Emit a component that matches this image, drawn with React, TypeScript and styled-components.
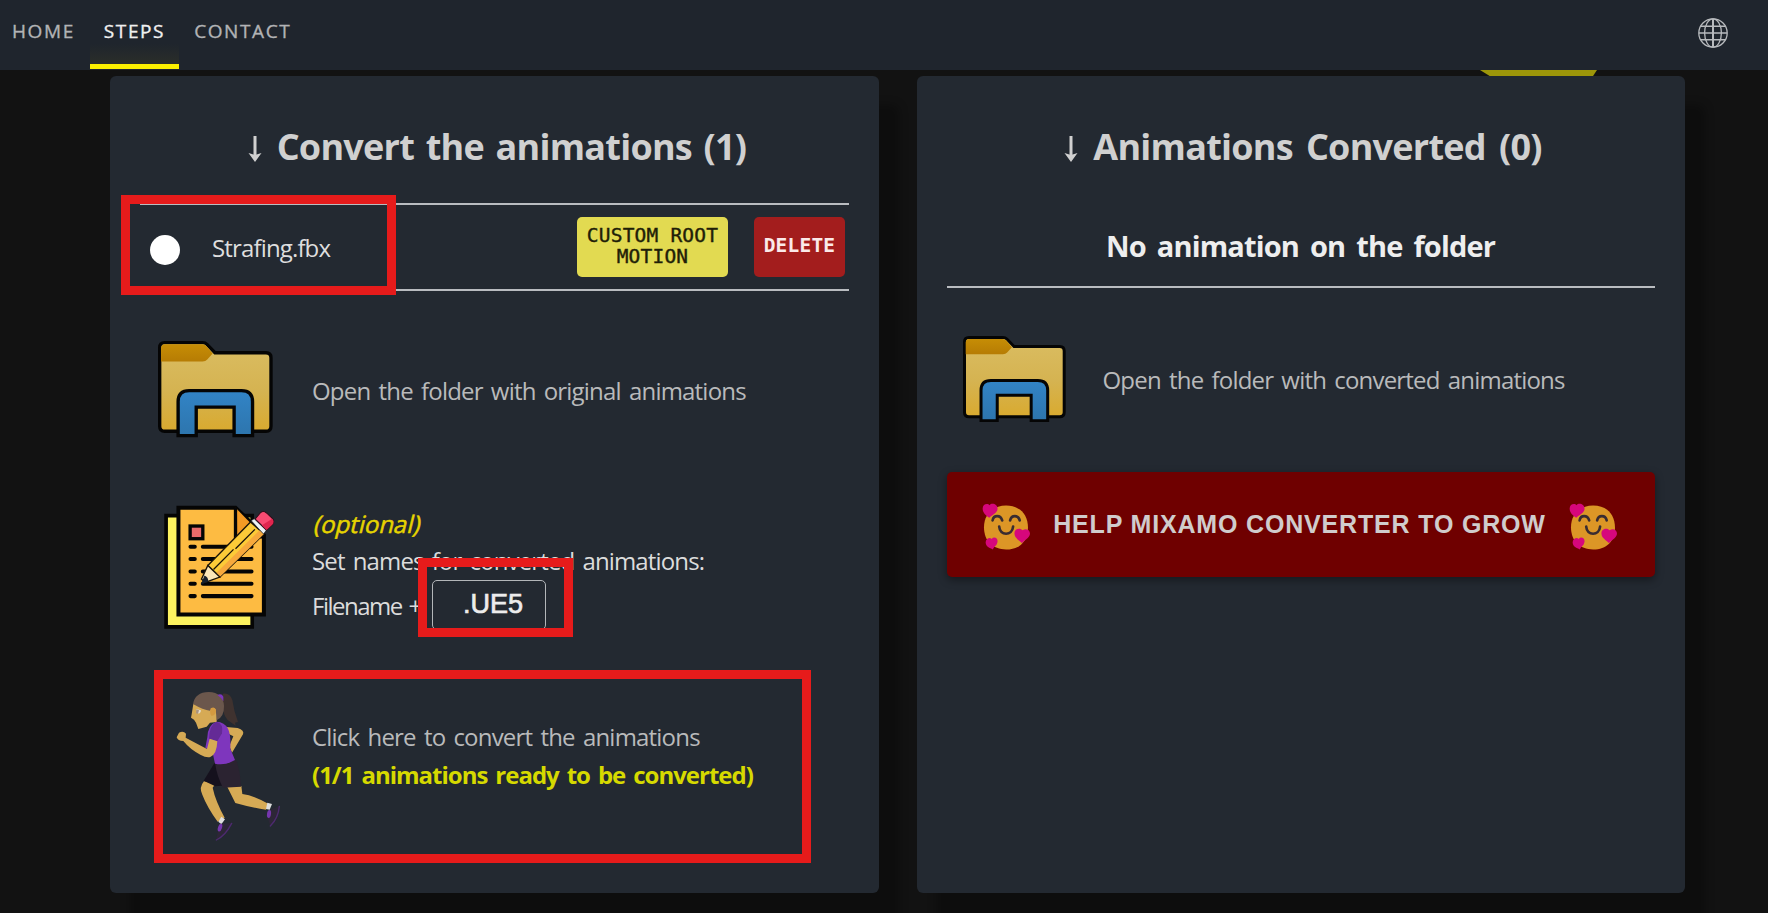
import React from "react";
import styled, { createGlobalStyle } from "styled-components";

const GlobalStyle = createGlobalStyle`
  * { box-sizing: border-box; }
  html, body { margin: 0; padding: 0; background: #121212; }
  body {
    font-family: "Open Sans", "Noto Sans", sans-serif;
    color: #d8d8d8;
    overflow: hidden;
  }
`;

const Page = styled.div`
  position: relative;
  width: 1768px;
  height: 913px;
  overflow: hidden;
  background: #121212;
`;

const Header = styled.header`
  position: relative;
  z-index: 2;
  display: flex;
  justify-content: space-between;
  height: 70px;
  padding-right: 40px;
  background: #1f252d;
`;

const Nav = styled.nav`
  display: flex;
  gap: 1px;
  margin-left: -2px;
`;

const Tab = styled.a<{ $active?: boolean }>`
  height: 69px;
  padding: 0 14px;
  font-size: 19px;
  font-weight: 500;
  line-height: 62px;
  letter-spacing: 1.6px;
  -webkit-text-stroke: 0.35px currentColor;
  color: ${(p) => (p.$active ? "#f0f0f0" : "#b2b3b5")};
  border-bottom: 5px solid ${(p) => (p.$active ? "#fbf000" : "transparent")};
  background: ${(p) =>
    p.$active ? "linear-gradient(to top, #2b2e29 0, #1f252d 20px)" : "none"};
`;

const GlobeButton = styled.span`
  display: flex;
  align-items: center;
  height: 65px;
`;

const Ribbon = styled.div`
  position: absolute;
  left: 1480px;
  top: 70px;
  width: 117px;
  height: 8px;
  background: #9d960a;
  clip-path: polygon(0 0, 100% 0, 95.5% 100%, 11% 100%);
`;

const Main = styled.main`
  position: relative;
  display: grid;
  grid-template-columns: 769px 768px;
  column-gap: 37.5px;
  padding: 6px 0 0 110px;
`;

const Card = styled.section`
  display: flex;
  flex-direction: column;
  height: 817px;
  padding: 45px 30px 0;
  border-radius: 6px;
  background: #232931;
  box-shadow: 20px 29px 10px rgba(0, 0, 0, 0.28);
`;

const Title = styled.h2<{ $space: number }>`
  display: flex;
  justify-content: center;
  align-items: center;
  gap: 15px;
  margin: 0;
  padding: 1px 0 0 5px;
  height: 50px;
  font-size: 36px;
  font-weight: 700;
  line-height: 50px;
  letter-spacing: -0.75px;
  word-spacing: ${(p) => p.$space}px;
  color: #d0d0d0;
`;

const FileRow = styled.div`
  display: flex;
  align-items: center;
  height: 88px;
  margin-top: 32px;
  padding: 0 4px 0 10px;
  border-top: 2px solid #b9bcc0;
  border-bottom: 2px solid #b9bcc0;
`;

const Bullet = styled.span`
  width: 30px;
  height: 30px;
  margin: 6px 32px 0 0;
  border-radius: 50%;
  background: #fff;
`;

const FileName = styled.span`
  flex: 1;
  font-size: 24px;
  letter-spacing: -0.85px;
  color: #dedede;
`;

const SmallButton = styled.button<{ $danger?: boolean }>`
  width: ${(p) => (p.$danger ? 91 : 151)}px;
  height: 60px;
  margin-left: ${(p) => (p.$danger ? 26 : 0)}px;
  padding: 0 0 3px;
  border: 0;
  border-radius: 5px;
  font-family: "DejaVu Sans Mono", monospace;
  font-size: 19.5px;
  font-weight: ${(p) => (p.$danger ? 700 : 400)};
  line-height: 21px;
  letter-spacing: 0.2px;
  -webkit-text-stroke: ${(p) => (p.$danger ? 0 : 0.4)}px currentColor;
  color: ${(p) => (p.$danger ? "#fbe9e9" : "#1f1e08")};
  background: ${(p) => (p.$danger ? "#a31d1d" : "#e2da51")};
`;

const ActionRow = styled.div<{ $height: number; $iconCol: number; $top?: number }>`
  display: grid;
  grid-template-columns: ${(p) => p.$iconCol}px 1fr;
  grid-template-rows: ${(p) => p.$height}px;
  align-items: center;
  height: ${(p) => p.$height}px;
  margin-top: ${(p) => p.$top ?? 0}px;
`;

const IconSlot = styled.div<{ $left: number; $shift?: number }>`
  display: flex;
  padding-left: ${(p) => p.$left}px;
  margin-top: ${(p) => p.$shift ?? 0}px;
`;

const ActionText = styled.p<{ $bright?: boolean }>`
  margin: 0;
  font-size: 24px;
  line-height: 38px;
  letter-spacing: ${(p) => (p.$bright ? -0.86 : -0.8)}px;
  word-spacing: 2.7px;
  white-space: nowrap;
  color: ${(p) => (p.$bright ? "#dcdcdc" : "#b9babb")};
`;

const Ready = styled(ActionText)`
  font-weight: 700;
  letter-spacing: -1px;
  color: #d6d900;
`;

const Optional = styled.p`
  width: max-content;
  margin: 0 0 0 3px;
  font-size: 24px;
  font-weight: 500;
  line-height: 37px;
  transform: skewX(-14deg);
  -webkit-text-stroke: 0.5px currentColor;
  color: #e6d400;
`;

const SuffixLine = styled.label`
  display: grid;
  grid-template-columns: 120px auto;
  justify-content: start;
  align-items: center;
  font-size: 24px;
  letter-spacing: -1.5px;
  word-spacing: 2px;
  color: #dcdcdc;
`;

const SuffixBox = styled.span`
  width: 114px;
  height: 50px;
  padding-left: 30px;
  border: 1px solid #b3b6b9;
  border-radius: 5px;
  font-family: "Liberation Sans", Arial, sans-serif;
  font-size: 27px;
  line-height: 47px;
  letter-spacing: 0;
  -webkit-text-stroke: 0.7px #ececec;
  color: #ececec;
`;

const Empty = styled.p`
  margin: 45px 0 0;
  padding-bottom: 10px;
  border-bottom: 2px solid #b9bcc0;
  font-size: 29px;
  font-weight: 700;
  line-height: 60px;
  letter-spacing: -0.85px;
  word-spacing: 4.3px;
  text-align: center;
  color: #eeeeee;
`;

const HelpButton = styled.button`
  display: flex;
  flex-shrink: 0;
  justify-content: space-between;
  align-items: center;
  height: 105px;
  padding: 0 37px 0 35px;
  border: 0;
  border-radius: 5px;
  background: #6f0000;
  box-shadow: 0 3px 8px rgba(0, 0, 0, 0.4);
`;

const HelpLabel = styled.span`
  padding-bottom: 2px;
  font: 700 25px/30px "Liberation Sans", Arial, sans-serif;
  letter-spacing: 0.83px;
  color: #d0cccc;
`;

const Highlight = styled.div<{ $x: number; $y: number; $w: number; $h: number }>`
  position: absolute;
  z-index: 3;
  left: ${(p) => p.$x}px;
  top: ${(p) => p.$y}px;
  width: ${(p) => p.$w}px;
  height: ${(p) => p.$h}px;
  border: 9px solid #e61b1b;
  pointer-events: none;
`;

const ArrowIcon = styled.svg`
  margin-top: 4px;
`;

const Arrow = () => (
  <ArrowIcon width="14" height="26" viewBox="0 0 14 26">
    <path d="M7 0V23" stroke="#d0d0d0" strokeWidth="3" />
    <path d="M0.5 17L7 19L13.500 17L7 26Z" fill="#d0d0d0" />
  </ArrowIcon>
);

const Globe = () => (
  <svg width="30" height="30" viewBox="0 0 30 30" fill="none" stroke="#b8bbbe" strokeWidth="1.3">
    <circle cx="15" cy="15" r="14.2" />
    <ellipse cx="15" cy="15" rx="8.4" ry="14.2" />
    <path d="M15 1V29" strokeWidth="2" />
    <path d="M3 8.200H27M1 15H29M3 21.800H27" strokeWidth="1.500" />
  </svg>
);

const Folder = ({ width, id }: { width: number; id: string }) => (
  <svg width={width} height={width * 0.84} viewBox="143 65 343 288">
    <defs>
      <linearGradient id={`${id}-body`} x1="0" y1="0" x2="0" y2="1">
        <stop offset="0" stopColor="#dabd62" />
        <stop offset="0.55" stopColor="#d5b351" />
        <stop offset="1" stopColor="#d9aa2f" />
      </linearGradient>
      <linearGradient id={`${id}-tab`} x1="0" y1="0" x2="0" y2="1">
        <stop offset="0" stopColor="#c68d05" />
        <stop offset="1" stopColor="#b67c04" />
      </linearGradient>
      <linearGradient id={`${id}-clip`} x1="0" y1="0" x2="0" y2="1">
        <stop offset="0" stopColor="#3284c6" />
        <stop offset="1" stopColor="#2d75ad" />
      </linearGradient>
    </defs>
    <path
      d="M148 85Q148 70 163 70H276Q284 70 289 75L313 100H465Q480 100 480 115V319Q480 334 465 334H163Q148 334 148 319Z"
      fill={`url(#${id}-body)`}
      stroke="#050505"
      strokeWidth="10"
    />
    <path d="M152 86Q153 76 163 75H274Q282 75 287 80L306 102L290 120Q285 126 276 126H152Z" fill={`url(#${id}-tab)`} />
    <path
      d="M203 347V246Q203 213 236 213H392Q425 213 425 246V347H370V262H257V347Z"
      fill={`url(#${id}-clip)`}
      stroke="#050505"
      strokeWidth="10"
    />
  </svg>
);

const Notes = () => (
  <svg width="111" height="123.500" viewBox="160 75 332 370">
    <path d="M166 107H424V440H166Z" fill="#fdf360" stroke="#050505" strokeWidth="11" />
    <path d="M203 83H374L459 165V403H203Z" fill="#fdbb42" stroke="#050505" strokeWidth="12" />
    <path d="M374 83V170H459" fill="#f39a24" stroke="#050505" strokeWidth="10" />
    <path d="M380 94L414 128L382 162Z" fill="#f39a24" />
    <rect x="238" y="138" width="38" height="38" fill="#ea6a6a" stroke="#050505" strokeWidth="10" />
    <path
      d="M239 200H252M276 200H422M239 237H252M276 237H422M239 274H252M276 274H422M239 311H252M276 311H422M239 348H252M276 348H422"
      stroke="#050505"
      strokeWidth="12"
      strokeLinecap="round"
    />
    <path d="M291 256L419 126L459 162L327 291Z" fill="#fccb38" stroke="#1b1408" strokeWidth="4" />
    <path d="M314 281L446 151L459 162L327 291Z" fill="#f7a93c" />
    <path d="M308 268L368 208M374 206L432 148" stroke="#1b1408" strokeWidth="4" />
    <path d="M291 256L327 291L283 307L272 297Z" fill="#fbe6b8" stroke="#1b1408" strokeWidth="4" />
    <path d="M281 286Q293 290 292 304L270 314Z" fill="#17202c" />
    <path d="M421 122L430 116L466 151L458 162Z" fill="#eef3f5" stroke="#222" strokeWidth="2" />
    <path d="M433 117L448 99Q457 90 467 99L485 116Q492 124 484 134L467 150Z" fill="#f84b72" stroke="#2b0b16" strokeWidth="3" />
    <path d="M453 136L484 116Q492 124 484 134L467 150Z" fill="#e0264f" />
  </svg>
);

const Runner = () => (
  <svg width="105" height="150" viewBox="198 95 315 450">
    <path d="M338 103Q360 99 367 122Q371 153 384 188L375 190L377 199L361 188Q344 180 339 150Z" fill="#3f322f" />
    <path d="M348 203L383 206Q404 213 399 225L366 280L358 260L370 231L352 222Z" fill="#d6aa55" />
    <path d="M250 134L245 165L243 175L252 181L258 190L265 209L290 202L300 190L320 188L322 140Z" fill="#d6aa55" />
    <path d="M249 134Q255 99 296 98Q340 100 342 140Q343 172 320 183L317 150Q306 140 300 154Q280 152 249 134Z" fill="#6b574c" />
    <path d="M302 147Q315 140 318 153Q319 167 305 170Q298 164 302 147Z" fill="#d49a40" />
    <path d="M322 107Q335 101 340 112V126Q332 113 322 107Z" fill="#7c36bd" />
    <path d="M258 149L273 153Q272 164 263 162Z" fill="#e3dccb" />
    <path d="M259 150L267 153L264 163L258 162Z" fill="#a9927d" />
    <path d="M282 366Q266 384 277 406Q291 443 323 487L344 475Q316 424 308 385L316 374Z" fill="#d6aa55" />
    <path d="M352 383L376 431Q425 445 468 451L476 434Q432 408 397 404L394 380Z" fill="#d6aa55" />
    <path d="M313 312L331 314L352 378L316 381L281 364Z" fill="#15111d" />
    <path d="M315 310L379 303Q391 337 393 382L339 385Q321 352 315 310Z" fill="#2b2331" />
    <path d="M319 187Q344 188 354 208Q363 225 361 268L375 302Q348 319 315 313L308 280L286 265L292 234Q293 197 319 187Z" fill="#7e36bd" />
    <path d="M319 187Q341 192 336 222L322 246L297 239Q298 197 319 187Z" fill="#642a96" />
    <path d="M299 238L322 246Q320 285 302 292Q292 297 271 286Q240 270 220 245Q203 245 200 234L207 220Q220 213 228 223L227 235L291 269Z" fill="#d6aa55" />
    <path d="M334 472L345 480L334 495L325 487Z" fill="#dedede" />
    <path d="M472 430L486 434L479 451L468 449Z" fill="#dedede" />
    <path d="M329 494L366 490Q350 530 318 541Z" fill="#2d2637" />
    <path d="M480 452L507 440Q509 482 481 500L473 476Z" fill="#2d2637" />
    <path d="M365 492Q346 529 319 542M508 441Q505 476 481 500" fill="none" stroke="#4d2a70" strokeWidth="4" strokeLinecap="round" />
    <ellipse cx="330" cy="505" rx="6" ry="12" fill="#7636ae" transform="rotate(18 330 505)" />
    <ellipse cx="477" cy="464" rx="6" ry="12" fill="#7636ae" transform="rotate(8 477 464)" />
  </svg>
);

const SmileIcon = styled.svg`
  margin-top: 3px;
`;

const Smile = () => (
  <SmileIcon width="48.300" height="47" viewBox="155 127 146 141">
    <path d="M228 134C270 134 294 162 294 201C294 242 268 267 228 267C187 267 161 241 161 200C161 161 187 134 228 134Z" fill="#dc9626" />
    <path d="M187 179C190 162 211 162 216 179M240 179C244 162 265 162 269 179M207 198C209 226 246 227 249 198" fill="none" stroke="#392c31" strokeWidth="8" strokeLinecap="round" />
    <g fill="#d6077c">
      <path d="M178 133C184 125 202 129 202 144C202 156 188 161 177 171C167 164 157 157 157 143C157 128 173 126 178 133Z" />
      <path d="M278 209C286 202 301 207 300 220C298 233 283 238 276 248C267 238 253 233 253 218C253 203 271 200 278 209Z" />
      <path d="M184 235C191 227 203 232 202 243C201 255 192 257 188 267C178 262 167 259 166 246C166 234 179 229 184 235Z" />
    </g>
  </SmileIcon>
);

export default function App() {
  return (
    <Page>
      <GlobalStyle />
      <Header>
        <Nav>
          <Tab>HOME</Tab>
          <Tab $active>STEPS</Tab>
          <Tab>CONTACT</Tab>
        </Nav>
        <GlobeButton>
          <Globe />
        </GlobeButton>
      </Header>
      <Ribbon />
      <Main>
        <Card>
          <Title $space={3}>
            <Arrow />
            <span>Convert the animations (1)</span>
          </Title>
          <FileRow>
            <Bullet />
            <FileName>Strafing.fbx</FileName>
            <SmallButton>
              CUSTOM ROOT
              <br />
              MOTION
            </SmallButton>
            <SmallButton $danger>DELETE</SmallButton>
          </FileRow>
          <ActionRow $height={120} $iconCol={172} $top={40}>
            <IconSlot $left={17.5} $shift={-3}>
              <Folder width={115} id="original" />
            </IconSlot>
            <ActionText>Open the folder with original animations</ActionText>
          </ActionRow>
          <ActionRow $height={233} $iconCol={172}>
            <IconSlot $left={23.5} $shift={-1}>
              <Notes />
            </IconSlot>
            <div>
              <Optional>(optional)</Optional>
              <ActionText $bright>Set names for converted animations:</ActionText>
              <SuffixLine>
                Filename +<SuffixBox>.UE5</SuffixBox>
              </SuffixLine>
            </div>
          </ActionRow>
          <ActionRow $height={143} $iconCol={172}>
            <IconSlot $left={36} $shift={21}>
              <Runner />
            </IconSlot>
            <div>
              <ActionText>Click here to convert the animations</ActionText>
              <Ready>(1/1 animations ready to be converted)</Ready>
            </div>
          </ActionRow>
        </Card>
        <Card>
          <Title $space={4.5}>
            <Arrow />
            <span>Animations Converted (0)</span>
          </Title>
          <Empty>No animation on the folder</Empty>
          <ActionRow $height={184} $iconCol={156}>
            <IconSlot $left={16} $shift={-2}>
              <Folder width={103} id="converted" />
            </IconSlot>
            <ActionText>Open the folder with converted animations</ActionText>
          </ActionRow>
          <HelpButton>
            <Smile />
            <HelpLabel>HELP MIXAMO CONVERTER TO GROW</HelpLabel>
            <Smile />
          </HelpButton>
        </Card>
      </Main>
      <Highlight $x={121} $y={195} $w={275} $h={100} />
      <Highlight $x={418} $y={558} $w={155} $h={79} />
      <Highlight $x={154} $y={670} $w={657} $h={193} />
    </Page>
  );
}
